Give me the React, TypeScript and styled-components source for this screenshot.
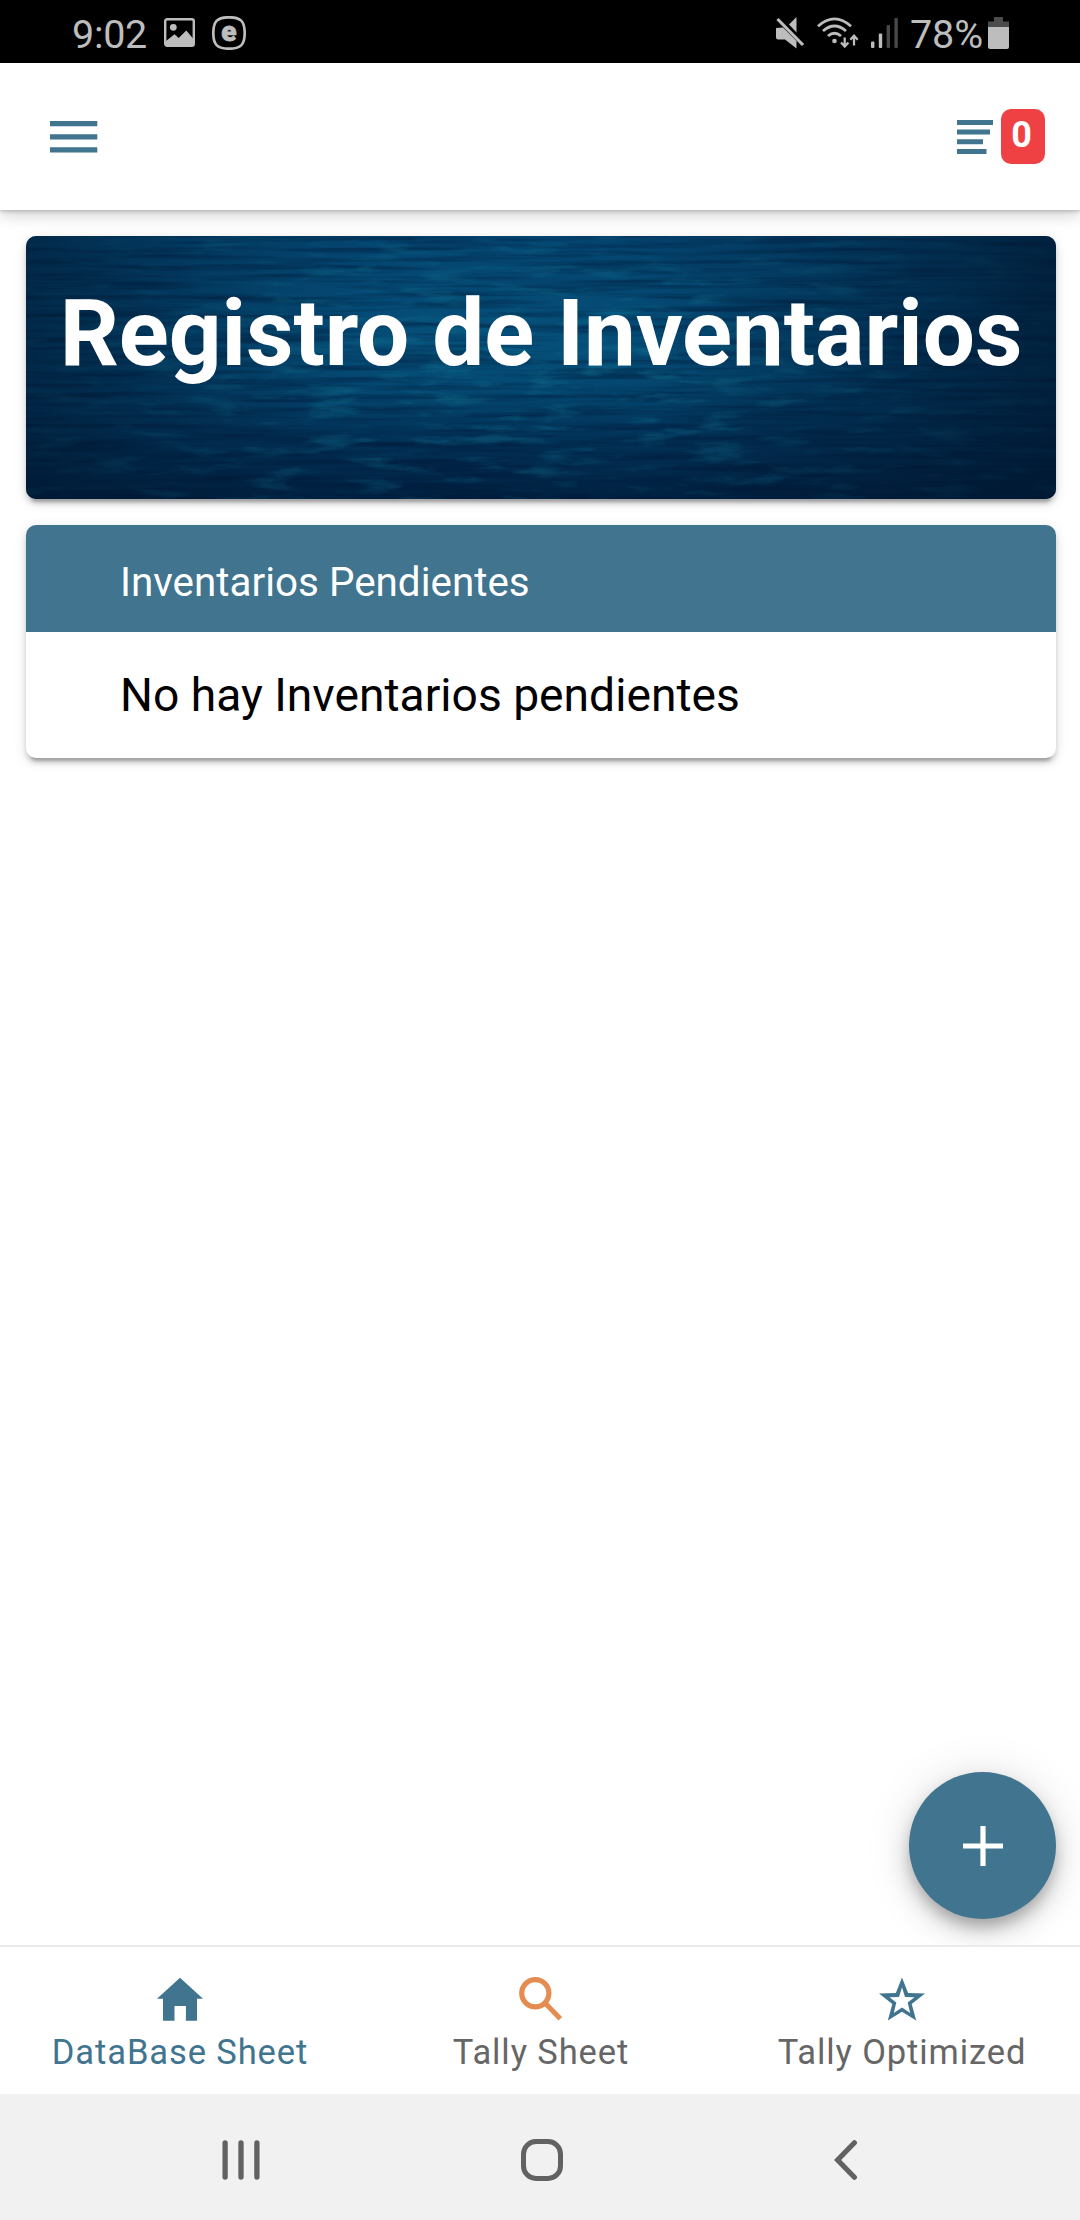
import React from "react";
import styled, { createGlobalStyle } from "styled-components";

const BLUE = "#40748f";

const GlobalStyle = createGlobalStyle`
  *, *::before, *::after { box-sizing: border-box; }
  html, body { margin: 0; padding: 0; background: #fff; }
  body { font-family: Roboto, "Liberation Sans", sans-serif; }
  svg { display: block; flex: none; }
`;

const Screen = styled.div`
  position: relative;
  display: flex;
  flex-direction: column;
  width: 1080px;
  height: 2220px;
  overflow: hidden;
  background: #fff;
`;

const StatusBar = styled.div`
  display: flex;
  justify-content: space-between;
  align-items: center;
  height: 63px;
  padding: 2px 71px 0 72px;
  background: #000;
  color: #bdbdbd;
`;

const StatusGroup = styled.div<{ $gap: number }>`
  display: flex;
  align-items: center;
  gap: ${(p) => p.$gap}px;
`;

const StatusText = styled.span<{ $spacing?: number }>`
  font-size: 39.5px;
  line-height: 48px;
  padding-top: 4px;
  letter-spacing: ${(p) => p.$spacing ?? 0}px;
`;

const Toolbar = styled.header`
  position: relative;
  z-index: 1;
  display: flex;
  justify-content: space-between;
  align-items: center;
  height: 147px;
  padding: 0 35px 0 50px;
  background: #fff;
  box-shadow: 0 2px 3px rgba(0, 0, 0, 0.16), 0 4px 16px rgba(0, 0, 0, 0.2);
`;

const PlainButton = styled.button`
  display: flex;
  align-items: center;
  gap: 8px;
  padding: 0;
  border: 0;
  background: none;
  font-family: inherit;
`;

const Badge = styled.span`
  width: 44px;
  height: 55px;
  padding-right: 3px;
  border-radius: 10px;
  background: #ef4144;
  color: #fff;
  font-size: 36px;
  font-weight: 700;
  line-height: 53px;
  text-align: center;
`;

const Content = styled.main`
  display: flex;
  flex: 1;
  flex-direction: column;
  gap: 26px;
  padding: 26px 24px 0 26px;
`;

const Card = styled.section<{ $height: number }>`
  display: grid;
  flex: none;
  height: ${(p) => p.$height}px;
  border-radius: 10px;
  overflow: hidden;
  background: #fff;
  box-shadow: 0 5px 5px rgba(0, 0, 0, 0.14), 0 8px 3px -5px rgba(0, 0, 0, 0.2),
    0 3px 13px rgba(0, 0, 0, 0.12);
`;

const BannerCard = styled(Card)`
  > * { grid-area: 1 / 1; }
`;

const BannerTitle = styled.h1`
  position: relative;
  margin: 0;
  padding-top: 43px;
  color: #fff;
  font-size: 92.5px;
  font-weight: 700;
  letter-spacing: -0.05px;
  line-height: 110px;
  text-align: center;
  white-space: nowrap;
`;

const ListCard = styled(Card)`
  grid-template-rows: 107px 1fr;
`;

const ListHeader = styled.div`
  display: flex;
  align-items: center;
  padding: 8px 94px 0;
  background: ${BLUE};
  color: #fff;
  font-size: 40.4px;
`;

const ListRow = styled.div`
  display: flex;
  align-items: center;
  padding: 0 94px;
  color: #000;
  font-size: 46.2px;
`;

const Fab = styled.button`
  position: absolute;
  top: 1772px;
  right: 24px;
  display: flex;
  align-items: center;
  justify-content: center;
  width: 147px;
  height: 147px;
  padding: 0;
  border: 0;
  border-radius: 50%;
  background: ${BLUE};
  box-shadow: 0 9px 14px -2px rgba(0, 0, 0, 0.22), 0 12px 26px rgba(0, 0, 0, 0.14),
    0 3px 48px rgba(0, 0, 0, 0.12);
`;

const TabBar = styled.nav`
  position: relative;
  z-index: 1;
  display: grid;
  grid-template-columns: 360px 362px 360px;
  height: 149px;
  border-top: 2px solid #ebebeb;
  background: #fff;
`;

const Tab = styled.div<{ $active?: boolean }>`
  display: flex;
  flex-direction: column;
  align-items: center;
  gap: 10px;
  padding-top: 30px;
  color: ${(p) => (p.$active ? BLUE : "#666")};
`;

const TabLabel = styled.span`
  font-size: 34.5px;
  line-height: 42px;
  letter-spacing: 0.9px;
`;

const NavBar = styled.div`
  display: grid;
  grid-template-columns: 1fr 60px 1fr;
  align-items: center;
  height: 126px;
  padding: 6px 216px 0 215px;
  background: #f1f1f1;
`;

const NavSlot = styled.div<{ $align: string; $indent?: number }>`
  display: flex;
  justify-content: ${(p) => p.$align};
  padding-left: ${(p) => p.$indent ?? 0}px;
`;

const PictureIcon = () => (
  <svg width="31" height="29" viewBox="0 0 31 29">
    <rect x="1.2" y="1.2" width="28.6" height="26.6" rx="2" fill="none" stroke="#bdbdbd" strokeWidth="2.4" />
    <circle cx="9.3" cy="9.3" r="3.4" fill="#bdbdbd" />
    <path d="M2 23 10.5 16.3 14.7 20 22.3 12.5 29.5 21V28H2Z" fill="#bdbdbd" />
  </svg>
);

const EBadgeIcon = () => (
  <svg width="34" height="34" viewBox="0 0 34 34">
    <path
      d="M17 1.3C28.5 1.3 32.7 5 32.7 17S28.5 32.7 17 32.7 1.3 29 1.3 17 5.5 1.3 17 1.3Z"
      fill="none"
      stroke="#bdbdbd"
      strokeWidth="2.7"
    />
    <text
      x="17"
      y="24.6"
      textAnchor="middle"
      fontFamily="Roboto, sans-serif"
      fontSize="28"
      fontWeight="900"
      fill="#bdbdbd"
      stroke="#bdbdbd"
      strokeWidth="0.8"
    >
      e
    </text>
  </svg>
);

const MuteIcon = () => (
  <svg width="29" height="32" viewBox="0 0 29 32">
    <path d="M20.5 0V15.500L13 7.500Z" fill="#bdbdbd" />
    <path d="M0 11 7 10.500 20.500 24V31.500L9 22.500H2Q0 22.500 0 20.500Z" fill="#bdbdbd" />
    <path d="M1.5 2 27 28" stroke="#bdbdbd" strokeWidth="3.2" />
  </svg>
);

const WifiIcon = () => (
  <svg width="42" height="32" viewBox="0 0 42 32" fill="none" stroke="#bdbdbd" strokeWidth="2.8">
    <path d="M1 9.200Q17.500-5.500 34 9.200" />
    <path d="M6 14Q17.500 4 29 14" />
    <path d="M11 19Q17.500 13.500 24 19" />
    <circle cx="17.5" cy="24" r="2.3" fill="#bdbdbd" stroke="none" />
    <path d="M27.700 20.500V29M24 25.500 27.700 29.500 31.400 25.500M37 28.500V20M33.300 22.800 37 18.800 40.700 22.800" strokeWidth="2.3" />
  </svg>
);

const SignalIcon = () => (
  <svg width="27" height="30" viewBox="0 0 27 30">
    <rect x="0" y="23.5" width="3.4" height="6.5" rx="1" fill="#bdbdbd" />
    <rect x="7.8" y="15.5" width="3.4" height="14.5" rx="1" fill="#bdbdbd" />
    <rect x="15.6" y="7" width="3.4" height="23" rx="1" fill="#484848" />
    <rect x="23.4" y="0" width="3.4" height="30" rx="1" fill="#484848" />
  </svg>
);

const BatteryIcon = () => (
  <svg width="21" height="32" viewBox="0 0 21 32">
    <path d="M6 0h9v4.500h6V10H0V4.500h6Z" fill="#4c4c4c" />
    <path d="M0 10h21v20q0 2-2 2H2q-2 0-2-2Z" fill="#bdbdbd" />
  </svg>
);

const MenuIcon = () => (
  <svg width="48" height="32" viewBox="0 0 48 32" fill={BLUE}>
    <path d="M0 0h47.300v5.300H0ZM0 13.300h47.300v5.300H0ZM0 26.300h47.300v5.300H0Z" />
  </svg>
);

const ListIcon = () => (
  <svg width="36" height="34" viewBox="0 0 36 34" fill={BLUE}>
    <path d="M0 0h36v5H0ZM0 9.600h33v5H0ZM0 19.300h26v5H0ZM0 29h29.500v5H0Z" />
  </svg>
);

const PlusIcon = () => (
  <svg width="40" height="40" viewBox="0 0 40 40" fill="#fff">
    <path d="M17.400 0h5.200v17.400H40v5.200H22.600V40h-5.200V22.600H0v-5.200h17.400Z" />
  </svg>
);

const HomeIcon = () => (
  <svg width="46" height="44" viewBox="0 0 46 44">
    <path d="M23 .7 46 21.700h-6V43.700H28.900V29H17.500V43.700H6V21.700H0Z" fill={BLUE} />
  </svg>
);

const SearchIcon = () => (
  <svg width="44" height="44" viewBox="0 0 44 44" fill="none" stroke="#e58c51">
    <circle cx="16.3" cy="16.2" r="13.6" strokeWidth="5.2" />
    <path d="M26.500 26.500 41.300 41.700" strokeWidth="5" />
  </svg>
);

const StarIcon = () => (
  <svg width="46" height="44" viewBox="0 0 46 44">
    <path
      fillRule="evenodd"
      fill={BLUE}
      d="M23 .5 29.100 16 46 16.500 32.700 27 37.200 43.500 23 34.800 8.800 43.500 13.300 27 0 16.500 16.900 16ZM23 10.300 20 20 10.500 20.300 17.300 25.600 14.800 36 23 30.500 31.200 36 28.700 25.600 35.500 20.300 26 20Z"
    />
  </svg>
);

const OceanBackdrop = () => (
  <svg width="1030" height="263" viewBox="0 0 1030 263">
    <defs>
      <linearGradient id="depth" x1="0" y1="0" x2="0" y2="1">
        <stop offset="0" stopColor="#04446f" />
        <stop offset="0.55" stopColor="#033f68" />
        <stop offset="0.8" stopColor="#022f54" />
        <stop offset="1" stopColor="#012141" />
      </linearGradient>
      <radialGradient id="glow" cx="0.45" cy="0.4" r="0.4">
        <stop offset="0" stopColor="#08628c" stopOpacity="0.5" />
        <stop offset="1" stopColor="#08628c" stopOpacity="0" />
      </radialGradient>
      <linearGradient id="sides">
        <stop offset="0" stopColor="#00152d" stopOpacity="0.55" />
        <stop offset="0.16" stopColor="#00152d" stopOpacity="0.22" />
        <stop offset="0.32" stopColor="#00152d" stopOpacity="0" />
        <stop offset="0.6" stopColor="#00152d" stopOpacity="0" />
        <stop offset="0.8" stopColor="#00152d" stopOpacity="0.32" />
        <stop offset="1" stopColor="#00152d" stopOpacity="0.72" />
      </linearGradient>
      <radialGradient id="fade" cx="0.5" cy="0.5" r="0.55">
        <stop offset="0" stopColor="#fff" />
        <stop offset="1" stopColor="#fff" stopOpacity="0.5" />
      </radialGradient>
      <mask id="center">
        <rect width="1030" height="263" fill="url(#fade)" />
      </mask>
      <filter id="highlights" x="0" y="0" width="100%" height="100%" colorInterpolationFilters="sRGB">
        <feTurbulence type="fractalNoise" baseFrequency="0.018 0.1" numOctaves="4" seed="14" />
        <feColorMatrix values="0 0 0 0 0.07  0 0 0 0 0.45  0 0 0 0 0.57  3.6 0 0 0 -1.85" />
      </filter>
      <filter id="shadows" x="0" y="0" width="100%" height="100%" colorInterpolationFilters="sRGB">
        <feTurbulence type="fractalNoise" baseFrequency="0.006 0.17" numOctaves="3" seed="21" />
        <feColorMatrix values="0 0 0 0 0  0 0 0 0 0.08  0 0 0 0 0.2  0 2.5 0 0 -1.05" />
      </filter>
    </defs>
    <rect width="1030" height="263" fill="url(#depth)" />
    <rect width="1030" height="263" fill="url(#glow)" />
    <rect width="1030" height="263" filter="url(#shadows)" opacity="0.5" />
    <g mask="url(#center)">
      <rect width="1030" height="263" filter="url(#highlights)" opacity="0.5" />
    </g>
    <rect width="1030" height="263" fill="url(#sides)" />
  </svg>
);

const RecentsIcon = () => (
  <svg width="50" height="42" viewBox="0 0 50 42" stroke="#626262" strokeWidth="5.3" strokeLinecap="round">
    <path d="M10.100 4V38M26 4V38M41.900 4V38" />
  </svg>
);

const HomeButtonIcon = () => (
  <svg width="42" height="42" viewBox="0 0 42 42">
    <rect x="2.5" y="2.5" width="37" height="37" rx="12.5" fill="none" stroke="#626262" strokeWidth="5" />
  </svg>
);

const BackIcon = () => (
  <svg width="30" height="42" viewBox="0 0 30 42" fill="none" stroke="#626262" strokeWidth="5.2" strokeLinecap="round">
    <path d="M20.400 3.800 3.600 21 20.400 38.200" />
  </svg>
);

const tabs = [
  { label: "DataBase Sheet", icon: <HomeIcon />, active: true },
  { label: "Tally Sheet", icon: <SearchIcon /> },
  { label: "Tally Optimized", icon: <StarIcon /> },
];

export default function App() {
  return (
    <>
      <GlobalStyle />
      <Screen>
        <StatusBar>
          <StatusGroup $gap={17}>
            <StatusText $spacing={-0.3}>9:02</StatusText>
            <PictureIcon />
            <EBadgeIcon />
          </StatusGroup>
          <StatusGroup $gap={12}>
            <MuteIcon />
            <WifiIcon />
            <SignalIcon />
            <StatusGroup $gap={5}>
              <StatusText $spacing={-0.1}>78%</StatusText>
              <BatteryIcon />
            </StatusGroup>
          </StatusGroup>
        </StatusBar>

        <Toolbar>
          <PlainButton aria-label="Menu">
            <MenuIcon />
          </PlainButton>
          <PlainButton>
            <ListIcon />
            <Badge>0</Badge>
          </PlainButton>
        </Toolbar>

        <Content>
          <BannerCard $height={263}>
            <OceanBackdrop />
            <BannerTitle>Registro de Inventarios</BannerTitle>
          </BannerCard>
          <ListCard $height={233}>
            <ListHeader>Inventarios Pendientes</ListHeader>
            <ListRow>No hay Inventarios pendientes</ListRow>
          </ListCard>
        </Content>

        <Fab aria-label="Agregar">
          <PlusIcon />
        </Fab>

        <TabBar>
          {tabs.map((tab) => (
            <Tab key={tab.label} $active={tab.active}>
              {tab.icon}
              <TabLabel>{tab.label}</TabLabel>
            </Tab>
          ))}
        </TabBar>

        <NavBar>
          <NavSlot $align="flex-start">
            <RecentsIcon />
          </NavSlot>
          <NavSlot $align="center" $indent={5}>
            <HomeButtonIcon />
          </NavSlot>
          <NavSlot $align="flex-end">
            <BackIcon />
          </NavSlot>
        </NavBar>
      </Screen>
    </>
  );
}
